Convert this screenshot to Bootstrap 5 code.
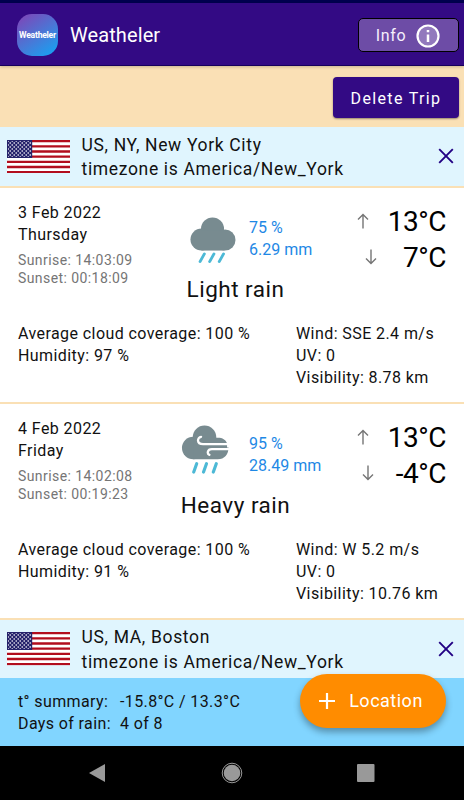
<!DOCTYPE html>
<html lang="en">
<head>
<meta charset="utf-8">
<meta name="viewport" content="width=device-width, initial-scale=1">
<title>Weatheler</title>
<link href="https://cdn.jsdelivr.net/npm/bootstrap@5.3.0/dist/css/bootstrap.min.css" rel="stylesheet">
<style>
body{font-family:Roboto,sans-serif;font-size:16px;line-height:22px;letter-spacing:.42px;color:#111;height:800px;overflow:hidden;background:#fae0b5}
.status-strip{height:3px;background:#00004f}
.app-header{height:63px;background:#330a84;padding:2px 5px 0 17px;border-bottom:1px solid #16005c;box-shadow:0 1px 3px #0003;position:relative}
.app-logo{width:41px;height:42px;border-radius:15px;background:linear-gradient(145deg,#8341b5 0%,#4a77d6 52%,#10a7f6 100%);color:#fff;font-size:8.6px;font-weight:700;letter-spacing:-.25px}
.app-title{font-size:20px;letter-spacing:.1px;color:#fff;margin-left:12px}
.info-btn{width:101px;height:34px;border:1px solid #000;border-radius:5px;background:#6d4ca6;color:#f5f0fb;font-size:16px;letter-spacing:.6px;gap:10px;padding:2px 1px 0 0}
.info-btn svg{margin-top:-1px}
.trip-actions{height:61px;padding:2px 5px 0 0}
.delete-btn{width:126px;height:41px;border-radius:4px;background:#330a84;border:0;color:#fff;font-size:16px;letter-spacing:1.35px;box-shadow:0 1px 2px #0006;padding:2px 0 0}
.place-head{height:58.5px;background:#e0f5fe;padding:0 10px 0 7px}
.place-text{font-size:17.5px;line-height:24.5px;letter-spacing:.66px;margin-left:11.5px;padding-top:2px}
.day-card,.next-place{margin-top:2px}
.day-card{height:214px;background:#fff;padding:15px 18px 0}
.day-top{height:120px}
.date-col{width:144px}
.date-text{margin-top:-.6px}
.sun-times{font-size:14px;line-height:18.5px;color:#757575;margin-top:4.6px}
.sky-col{width:147px;padding-top:14px}
.sky-light{margin:0 13.5px 0 27.5px}
.sky-windy{margin:-8px 20px 0 19px}
.sky-row{height:44px}
.rain-info{color:#1e88e5;letter-spacing:0}
.sky-name{font-size:22.5px;line-height:28px;letter-spacing:.5px;margin-top:14px;color:#111}
.temp-line{font-size:28px;line-height:36px;letter-spacing:-.5px;height:36px;color:#000}
.temp-line svg{margin-top:-2px}
.day-temps{padding-top:1px}
.gap-high{gap:19px}.gap-low{gap:26px}.gap-neg{gap:22px}
.detail-left{width:278px}
.summary-bar{height:68px;background:#81d5ff;padding:13px 18px 0;position:relative;letter-spacing:.38px}
.summary-label{width:102px}
.add-btn{position:absolute;right:18px;top:-4.5px;width:146px;height:54px;background:#ff8c00;color:#fff;font-size:18px;letter-spacing:.5px;border:0;border-radius:27px;box-shadow:0 4px 7px #0005;gap:14px;padding:1px 4px 0 0}
.system-nav{height:54px;background:#000}
</style>
<script src="https://cdn.jsdelivr.net/npm/bootstrap@5.3.0/dist/js/bootstrap.bundle.min.js"></script>
</head>
<body>
<svg width="0" height="0" class="position-absolute" aria-hidden="true">
<defs>
<pattern id="stars" width="4" height="4" patternUnits="userSpaceOnUse"><path d="M.5 1H2M2.500 3H4" stroke="#fff" stroke-width="1.300" opacity=".8"/></pattern>
<symbol id="flag" viewBox="0 0 63 33.5"><path fill="#fff" d="M0 0h63v33.5H0z"/><path stroke="#b20d1d" stroke-width="2.3" d="M0 1.2h63M0 6.4h63M0 11.5h63M0 16.7h63M0 21.9h63M0 27h63M0 32.2h63"/><path fill="#25236b" d="M0 0h25.2v18H0z"/><path fill="url(#stars)" d="M1 1h23v16H1z"/></symbol>
<symbol id="cloud" viewBox="0 0 48 49"><g fill="#788b90"><circle cx="23.5" cy="12.5" r="12"/><circle cx="12" cy="23.5" r="11.500"/><circle cx="36.5" cy="24" r="11"/><path d="M12 14h24v21H12z"/></g><path d="m15 38.500-4.500 8M25 38.500l-4.500 8M35 38.500l-4.500 8" stroke="#4db9d6" stroke-width="3" stroke-linecap="round"/></symbol>
<symbol id="windy" viewBox="0 0 48 50"><g fill="#788b90"><circle cx="23.5" cy="12.5" r="12"/><circle cx="12" cy="23.5" r="11.500"/><path d="M12 13h25c5 0 8 2 9.500 5.500V23H48c0 7-4 12-11 12H12z"/></g><path d="M48 19.500H22c-7 0-6-7-2-7.500M48 24.700H31c-5 0-5 5-2.500 5.700" fill="none" stroke="#fff" stroke-width="2.300" stroke-linecap="round"/><path d="m15.500 39.500-3 8.500M25.500 39.500l-3 8.500M35.500 39.500l-3 8.500" stroke="#4db9d6" stroke-width="3.200" stroke-linecap="round"/></symbol>
<symbol id="up" viewBox="0 0 12 16"><path d="M6 15.500V1.500M1 6.500l5-5 5 5" fill="none" stroke="#757575" stroke-width="1.400"/></symbol>
<symbol id="down" viewBox="0 0 12 16"><path d="M6 .5v14M1 9.500l5 5 5-5" fill="none" stroke="#757575" stroke-width="1.400"/></symbol>
<symbol id="close" viewBox="0 0 16 16"><path d="m1.200 1.200 13.600 13.600M14.800 1.200 1.200 14.800" stroke="#220084" stroke-width="1.900"/></symbol>
</defs>
</svg>
<div class="status-strip"></div>
<header class="app-header d-flex align-items-center">
  <div class="app-logo d-flex align-items-center justify-content-center">Weatheler</div>
  <div class="app-title">Weatheler</div>
  <button class="info-btn ms-auto d-flex align-items-center justify-content-center">Info
    <svg width="24" height="24" viewBox="0 0 24 24"><circle cx="12" cy="12" r="10.500" fill="#9279bd" stroke="#fff" stroke-width="2.200"/><path d="M12 10.500V18M12 6v2.300" stroke="#fff" stroke-width="2.500"/></svg>
  </button>
</header>
<div class="trip-actions d-flex align-items-center justify-content-end"><button class="delete-btn">Delete Trip</button></div>
<section class="place-head d-flex align-items-center">
  <svg width="63" height="33.500"><use href="#flag"/></svg>
  <div class="place-text">US, NY, New York City<br>timezone is America/New_York</div>
  <svg class="ms-auto" width="16" height="16"><use href="#close"/></svg>
</section>
<article class="day-card">
  <div class="day-top d-flex">
    <div class="date-col"><div class="date-text">3 Feb 2022<br>Thursday</div><div class="sun-times">Sunrise: 14:03:09<br>Sunset: 00:18:09</div></div>
    <div class="sky-col">
      <div class="sky-row d-flex align-items-start"><svg class="sky-light flex-shrink-0" width="46" height="47"><use href="#cloud"/></svg><div class="rain-info text-nowrap">75 %<br>6.29 mm</div></div>
      <div class="sky-name text-center">Light rain</div>
    </div>
    <div class="day-temps flex-grow-1">
      <div class="temp-line gap-high d-flex align-items-center justify-content-end"><svg width="12" height="16"><use href="#up"/></svg>13°C</div>
      <div class="temp-line gap-low d-flex align-items-center justify-content-end"><svg width="12" height="16"><use href="#down"/></svg>7°C</div>
    </div>
  </div>
  <div class="d-flex"><div class="detail-left">Average cloud coverage: 100 %<br>Humidity: 97 %</div><div class="text-nowrap">Wind: SSE 2.4 m/s<br>UV: 0<br>Visibility: 8.78 km</div></div>
</article>
<article class="day-card">
  <div class="day-top d-flex">
    <div class="date-col"><div class="date-text">4 Feb 2022<br>Friday</div><div class="sun-times">Sunrise: 14:02:08<br>Sunset: 00:19:23</div></div>
    <div class="sky-col">
      <div class="sky-row d-flex align-items-start"><svg class="sky-windy flex-shrink-0" width="48" height="49"><use href="#windy"/></svg><div class="rain-info text-nowrap">95 %<br>28.49 mm</div></div>
      <div class="sky-name text-center">Heavy rain</div>
    </div>
    <div class="day-temps flex-grow-1">
      <div class="temp-line gap-high d-flex align-items-center justify-content-end"><svg width="12" height="16"><use href="#up"/></svg>13°C</div>
      <div class="temp-line gap-neg d-flex align-items-center justify-content-end"><svg width="12" height="16"><use href="#down"/></svg>-4°C</div>
    </div>
  </div>
  <div class="d-flex"><div class="detail-left">Average cloud coverage: 100 %<br>Humidity: 91 %</div><div class="text-nowrap">Wind: W 5.2 m/s<br>UV: 0<br>Visibility: 10.76 km</div></div>
</article>
<section class="place-head next-place d-flex align-items-center">
  <svg width="63" height="33.500"><use href="#flag"/></svg>
  <div class="place-text">US, MA, Boston<br>timezone is America/New_York</div>
  <svg class="ms-auto" width="16" height="16"><use href="#close"/></svg>
</section>
<footer class="summary-bar">
  <div class="d-flex"><div class="summary-label">t° summary:</div><div>-15.8°C / 13.3°C</div></div>
  <div class="d-flex"><div class="summary-label">Days of rain:</div><div>4 of 8</div></div>
  <button class="add-btn d-flex align-items-center justify-content-center"><svg width="16" height="16" viewBox="0 0 16 16"><path d="M8 0v16M0 8h16" stroke="#fff" stroke-width="2.200"/></svg>Location</button>
</footer>
<nav class="system-nav d-flex align-items-center">
  <svg width="464" height="54" viewBox="0 0 464 54" fill="#999"><path d="M89 27 105 18v18z"/><circle cx="232" cy="27" r="8.300"/><circle cx="232" cy="27" r="9.800" fill="none" stroke="#999" stroke-width="1"/><rect x="357" y="18" width="17.500" height="18" rx="1"/></svg>
</nav>
</body>
</html>
